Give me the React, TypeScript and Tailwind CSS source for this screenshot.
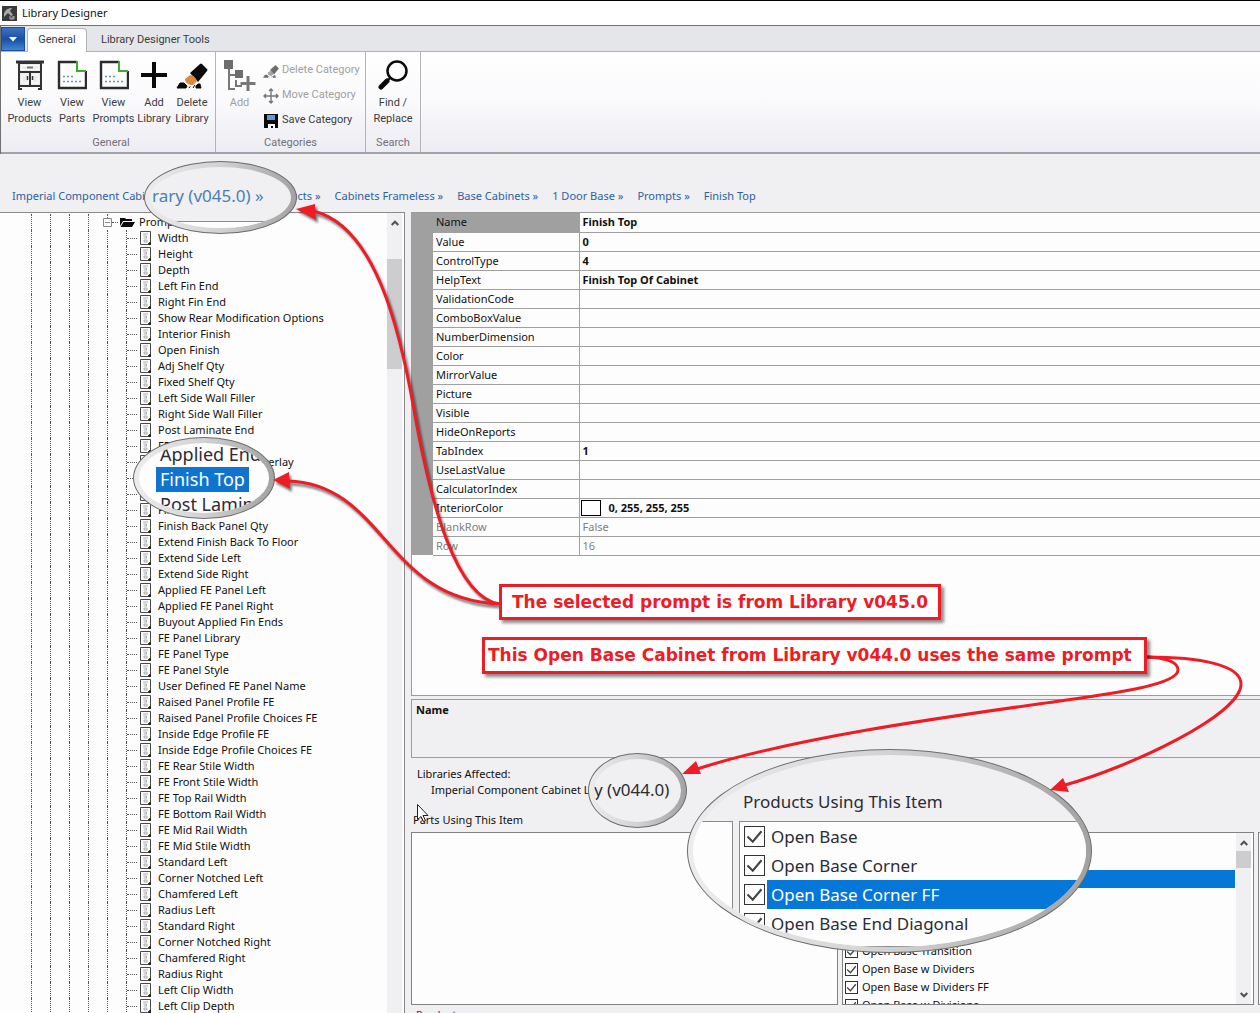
import type { ReactNode } from 'react';

interface Property {
  name: string;
  value?: string;
  swatch?: boolean;
  readOnly?: boolean;
}

const prompts = [
  'Width', 'Height', 'Depth', 'Left Fin End', 'Right Fin End', 'Show Rear Modification Options',
  'Interior Finish', 'Open Finish', 'Adj Shelf Qty', 'Fixed Shelf Qty', 'Left Side Wall Filler',
  'Right Side Wall Filler', 'Post Laminate End', 'FE Override', 'Applied End Panel Overlay',
  'Finish Top', 'Post Laminate Top', 'Finish Back', 'Finish Back Panel Qty',
  'Extend Finish Back To Floor', 'Extend Side Left', 'Extend Side Right', 'Applied FE Panel Left',
  'Applied FE Panel Right', 'Buyout Applied Fin Ends', 'FE Panel Library', 'FE Panel Type',
  'FE Panel Style', 'User Defined FE Panel Name', 'Raised Panel Profile FE',
  'Raised Panel Profile Choices FE', 'Inside Edge Profile FE', 'Inside Edge Profile Choices FE',
  'FE Rear Stile Width', 'FE Front Stile Width', 'FE Top Rail Width', 'FE Bottom Rail Width',
  'FE Mid Rail Width', 'FE Mid Stile Width', 'Standard Left', 'Corner Notched Left',
  'Chamfered Left', 'Radius Left', 'Standard Right', 'Corner Notched Right', 'Chamfered Right',
  'Radius Right', 'Left Clip Width', 'Left Clip Depth',
];

const properties: Property[] = [
  { name: 'Name', value: 'Finish Top' },
  { name: 'Value', value: '0' },
  { name: 'ControlType', value: '4' },
  { name: 'HelpText', value: 'Finish Top Of Cabinet' },
  { name: 'ValidationCode' },
  { name: 'ComboBoxValue' },
  { name: 'NumberDimension' },
  { name: 'Color' },
  { name: 'MirrorValue' },
  { name: 'Picture' },
  { name: 'Visible' },
  { name: 'HideOnReports' },
  { name: 'TabIndex', value: '1' },
  { name: 'UseLastValue' },
  { name: 'CalculatorIndex' },
  { name: 'InteriorColor', value: '0, 255, 255, 255', swatch: true },
  { name: 'BlankRow', value: 'False', readOnly: true },
  { name: 'Row', value: '16', readOnly: true },
];

const products = [
  'Open Base', 'Open Base Corner', 'Open Base Corner FF', 'Open Base End Diagonal',
  'Open Base End Diagonal FF', 'Open Base FF', 'Open Base Transition', 'Open Base w Dividers',
  'Open Base w Dividers FF', 'Open Base w Divisions',
];

const crumbs = [
  'Imperial Component Cabinet Library (v045.0) »', 'Products »', 'Cabinets Frameless »',
  'Base Cabinets »', '1 Door Base »', 'Prompts »', 'Finish Top',
];

function CabinetIcon() {
  return (
    <svg viewBox="0 0 30 30" className="size-[30px]" fill="none" stroke="#333" strokeWidth="2">
      <path d="M4 3h22v23H4z" fill="#ececec" />
      <path d="M1 2h28" strokeWidth="3" />
      <path d="M4 12h22M15 12v14M4 26v3M26 26v3" />
      <path d="M6.500 5.500h17v4h-17zM7 15h6v8H7zM17 15h6v8h-6z" stroke="#fff" strokeWidth="1" />
      <path d="M12 7.500h6" stroke="#777" />
      <path d="M12.500 16v4M17.500 16v4" strokeWidth="1.500" />
      <path d="M3 29h4M23 29h4" />
    </svg>
  );
}

function SheetIcon() {
  return (
    <svg viewBox="0 0 30 30" className="size-[30px]" fill="none">
      <path d="M20 2H2v26h27V11" stroke="#2b2b2b" strokeWidth="2.400" />
      <path d="M20 1v10h9" stroke="#3cae2c" strokeWidth="2" />
      <path d="M6 16.500h11M6 21.500h20" stroke="#6f8fb8" strokeWidth="1.600" strokeDasharray="2 2" />
    </svg>
  );
}

function EraserIcon({ className, muted }: { className: string; muted?: boolean }) {
  return (
    <svg viewBox="0 0 32 30" className={className}>
      <path d="M14 13 24 4q1-1 2 0l5 5q1 1 0 2l-9 11z" fill={muted ? '#6d6d6d' : '#0a0a0a'} />
      <path d="m9 19 5-4c3 0 6 3 7 6l-4 4c-4 0-8-2-8-6z" fill={muted ? '#a5a5a5' : '#dc8b3d'} />
      <path
        d="m1 28 3-5h4l3 3-1 2zM13 28l1-1.500M17 28l2-3M20 26l2-2h2l1 4h-5z"
        fill={muted ? '#6d6d6d' : '#0a0a0a'}
        stroke={muted ? '#6d6d6d' : '#0a0a0a'}
      />
    </svg>
  );
}

function TreeAddIcon() {
  return (
    <svg viewBox="0 0 32 34" className="h-[34px] w-8" fill="none" stroke="#777" strokeWidth="2">
      <path d="M5 9v20h6M5 15h6M12 20v6h6" />
      <path d="M0 0h9v9H0zM11 10h8v8h-8z" fill="#6d6d6d" stroke="none" />
      <path d="M24 16v15M16.500 23.500h15" strokeWidth="3" />
    </svg>
  );
}

function MoveIcon() {
  return (
    <svg viewBox="0 0 16 16" className="size-4" fill="none" stroke="#777" strokeWidth="1.400">
      <path d="M8 1v14M1 8h14M6 3l2-2 2 2M6 13l2 2 2-2M3 6 1 8l2 2M13 6l2 2-2 2" />
    </svg>
  );
}

function SaveIcon() {
  return (
    <svg viewBox="0 0 14 14" className="mx-px size-[14px]">
      <path d="M0 0h14v14H0z" fill="#0a0a0a" />
      <path d="M3 1h8v5H3z" fill="#5a9bd8" />
      <path d="M4 10h7v4H9v-2H7v2H4z" fill="#fff" />
    </svg>
  );
}

function PromptIcon() {
  return (
    <svg viewBox="0 0 12 16" className="h-4 w-3 shrink-0" fill="none" stroke="#4a4a4a">
      <path d="M.5 1.500h10v10l-3 3h-7z" />
      <path d="M3 4h5M3.500 6h3v2h-3M4 10h3v2H4z" stroke="#999" strokeWidth=".8" />
      <path d="M11 11v4H7.500z" fill="#222" stroke="none" />
    </svg>
  );
}

function Chevron({ down }: { down?: boolean }) {
  return (
    <svg viewBox="0 0 8 6" className="h-[6px] w-2" fill="none" stroke="#505050" strokeWidth="2">
      <path d={down ? 'M.7 1 4 4.300 7.300 1' : 'M.7 5 4 1.700 7.300 5'} />
    </svg>
  );
}

function RibbonButton({ className, icon, label }: { className: string; icon: ReactNode; label: string }) {
  return (
    <button className={`flex flex-col items-center pt-[2px] leading-4 ${className}`}>
      <span className="flex h-[35px] items-start">{icon}</span>
      <span className="whitespace-pre-line text-center">{label}</span>
    </button>
  );
}

function RibbonGroup({ className, title, children }: { className: string; title: string; children: ReactNode }) {
  return (
    <section className={`flex flex-col border-r border-[#b4b4b8] ${className}`}>
      <div className="flex flex-1 items-start pt-[6px]">{children}</div>
      <h2 className="pb-px text-center leading-4 text-[#707078]">{title}</h2>
    </section>
  );
}

function Ribbon() {
  return (
    <div className="shrink-0 border-l border-[#707070] font-['Roboto',sans-serif] text-[11px] text-[#3c3c3c]">
      <div className="flex h-[26px] items-end border-b border-[#b2b2b8] bg-[#e5e6ea]">
        <button
          aria-label="Application menu"
          className="flex h-6 w-6 items-center justify-center border border-[#1c4e9c] bg-linear-to-b from-[#3b74c4] via-[#1a4f9f] to-[#3f86d8]"
        >
          <svg viewBox="0 0 8 5" className="h-[5px] w-2">
            <path d="M0 0h8L4 4.500z" fill="#fff" />
          </svg>
        </button>
        <nav className="flex items-end">
          <button className="-mb-px ml-[2px] h-6 w-[60px] rounded-t-sm border border-b-0 border-[#b2b2b8] bg-white">
            General
          </button>
          <button className="h-[22px] px-[14px]">Library Designer Tools</button>
        </nav>
      </div>
      <div className="flex h-[102px] border-b-2 border-[#a2a2aa] bg-linear-to-b from-white via-[#fafafc] to-[#ececf2]">
        <RibbonGroup className="w-[215px] pl-[6px]" title="General">
          <RibbonButton className="w-[45px]" icon={<CabinetIcon />} label={'View\nProducts'} />
          <RibbonButton className="w-10" icon={<SheetIcon />} label={'View\nParts'} />
          <RibbonButton className="w-[43px]" icon={<SheetIcon />} label={'View\nPrompts'} />
          <RibbonButton
            className="w-[38px]"
            icon={
              <svg viewBox="0 0 28 30" className="h-[30px] w-7" stroke="#0a0a0a" strokeWidth="4">
                <path d="M14 2v26M1 15h26" />
              </svg>
            }
            label={'Add\nLibrary'}
          />
          <RibbonButton className="w-[38px]" icon={<EraserIcon className="h-[30px] w-8" />} label={'Delete\nLibrary'} />
        </RibbonGroup>
        <RibbonGroup className="w-[150px]" title="Categories">
          <RibbonButton className="w-[47px] text-[#a0a0a0]" icon={<TreeAddIcon />} label="Add" />
          <div className="flex flex-col">
            <button className="flex h-[25px] items-center gap-[3px] text-[#a0a0a0]">
              <EraserIcon className="size-4" muted /> Delete Category
            </button>
            <button className="flex h-[25px] items-center gap-[3px] text-[#a0a0a0]">
              <MoveIcon /> Move Category
            </button>
            <button className="flex h-[25px] items-center gap-[3px]">
              <SaveIcon /> Save Category
            </button>
          </div>
        </RibbonGroup>
        <RibbonGroup className="w-[55px]" title="Search">
          <RibbonButton
            className="w-full"
            icon={
              <svg viewBox="0 0 30 30" className="size-[30px]" fill="none" stroke="#0a0a0a">
                <circle cx="19" cy="11" r="9.500" strokeWidth="2.500" />
                <path d="m12 18-3 3" strokeWidth="2" />
                <path d="m9 21-6 6" strokeWidth="5" strokeLinecap="round" />
              </svg>
            }
            label={'Find /\nReplace'}
          />
        </RibbonGroup>
      </div>
    </div>
  );
}

function TreeGuides() {
  return (
    <>
      <span className="w-[19px] border-l border-dotted border-[#555]" />
      <span className="w-[19px] border-l border-dotted border-[#555]" />
      <span className="w-[19px] border-l border-dotted border-[#555]" />
      <span className="w-[19px] border-l border-dotted border-[#555]" />
    </>
  );
}

function PromptTree() {
  return (
    <div className="flex w-[405px] shrink-0 overflow-hidden border-t border-r border-[#8a8a8a] bg-[#fdfdfe]">
      <ul className="min-w-0 flex-1 pt-px pl-[31px]">
        <li className="flex h-4">
          <TreeGuides />
          <span className="-ml-1 flex w-[9px] flex-col items-center">
            <span className="h-1 border-l border-dotted border-[#555]" />
            <svg viewBox="0 0 9 9" className="size-[9px] shrink-0" fill="#fff" stroke="#888">
              <path d="M.5.5h8v8h-8zM2 4.500h5" />
            </svg>
          </span>
          <span className="mr-px flex w-[6px] items-center">
            <span className="w-full border-t border-dotted border-[#555]" />
          </span>
          <svg viewBox="0 0 16 16" className="size-4">
            <path d="M1 4h5l1 1h6v2H4l-3 5zM4.500 8H16l-3 5H1.500z" fill="#0a0a0a" />
          </svg>
          <span className="ml-1 leading-4">Prompts</span>
        </li>
        {prompts.map((prompt) => (
          <li key={prompt} className="flex h-4">
            <TreeGuides />
            <span className="w-[19px] border-l border-dotted border-[#555]" />
            <span className="flex w-[14px] items-center border-l border-dotted border-[#555]">
              <span className="w-[10px] border-t border-dotted border-[#555]" />
            </span>
            <PromptIcon />
            <span className="ml-[6px] whitespace-nowrap leading-4">{prompt}</span>
          </li>
        ))}
      </ul>
      <div className="mr-[2px] flex w-[15px] flex-col items-center bg-[#f0eff1] pt-[7px]">
        <Chevron />
        <span className="mt-[33px] h-[110px] w-full bg-[#cdcccf]" />
      </div>
    </div>
  );
}

function PropertyGrid() {
  return (
    <div className="h-[484px] shrink-0 border border-r-0 border-[#9c9c9c] bg-[#fdfdfe]">
      <table className="w-full table-fixed border-collapse">
        <colgroup>
          <col className="w-[21px]" />
          <col className="w-[146px]" />
          <col />
        </colgroup>
        <tbody>
          {properties.map((p, i) => (
            <tr key={p.name} className={`h-[19px] leading-[18px] ${p.readOnly ? 'text-[#808080]' : ''}`}>
              <td className="bg-[#a0a0a0] p-0" />
              <th
                scope="row"
                className={`border-r border-b border-[#a0a0a0] p-0 pl-[3px] text-left font-normal ${i === 0 ? 'bg-[#a0a0a0]' : ''}`}
              >
                {p.name}
              </th>
              <td className={`border-b border-[#a0a0a0] p-0 pl-[3px] ${p.readOnly ? '' : 'font-bold'}`}>
                <span className="flex items-center gap-2">
                  {p.swatch && <span className="-ml-[2px] h-4 w-5 border border-black bg-white" />}
                  {p.value}
                </span>
              </td>
            </tr>
          ))}
        </tbody>
      </table>
    </div>
  );
}

function Check({ id, className }: { id: string; className: string }) {
  return (
    <span className={`relative flex shrink-0 ${className}`}>
      <input
        id={id}
        type="checkbox"
        defaultChecked
        className="size-full appearance-none border border-[#333] bg-white"
      />
      <svg viewBox="0 0 12 12" className="pointer-events-none absolute inset-0 size-full" fill="none" stroke="#444">
        <path d="M2 6l3 3 5-6" strokeWidth="1.200" />
      </svg>
    </span>
  );
}

function AffectedLists() {
  return (
    <div className="flex h-[173px] shrink-0 gap-1">
      <div className="w-[427px] shrink-0 border border-[#828282] bg-[#fdfdfe]" />
      <div className="flex min-w-0 flex-1 border border-[#828282] bg-[#fdfdfe]">
        <ul className="min-w-0 flex-1 overflow-hidden pt-px pl-[2px]">
          {products.map((product, i) => (
            <li key={product} className="flex h-[18px] items-center gap-[2px]">
              <Check id={`product-${i}`} className="size-[13px]" />
              <label
                htmlFor={`product-${i}`}
                className={`h-[18px] flex-1 pl-[2px] leading-[18px] ${i === 2 ? 'bg-[#0477d9] text-white' : ''}`}
              >
                {product}
              </label>
            </li>
          ))}
        </ul>
        <div className="mr-[2px] ml-px flex w-[15px] flex-col items-center bg-[#f0eff1] pt-[7px] pb-[6px]">
          <Chevron />
          <span className="mt-[5px] h-[17px] w-full bg-[#cdcccf]" />
          <span className="mt-auto">
            <Chevron down />
          </span>
        </div>
      </div>
      <div className="w-[2px] border-y border-l border-[#828282] bg-[#fdfdfe]" />
    </div>
  );
}

function Lens({ className, children }: { className: string; children: ReactNode }) {
  return (
    <div
      className={`absolute rounded-[50%] border border-[#6c6c6c] bg-linear-to-r from-[#ededed] via-[#d2d2d2] to-[#a2a2a2] p-[5px] ${className}`}
    >
      <div className="flex size-full flex-col overflow-hidden rounded-[50%] bg-[#f0eff1] whitespace-nowrap text-[#2c2c34]">
        {children}
      </div>
    </div>
  );
}

function Lenses() {
  return (
    <>
      <Lens className="top-[161px] left-[144px] h-[73px] w-[153px]">
        <p className="h-[55px] border-b border-[#8a8a8a] pt-[17px] pl-[2px] text-[17px] leading-6 text-[#4a80b8]">
          rary (v045.0) »
        </p>
        <div className="flex-1 bg-[#fdfdfe]" />
      </Lens>
      <Lens className="top-[437px] left-[133px] h-[82px] w-[142px]">
        <div className="flex h-full flex-col bg-[#fdfdfe] pl-[17px] text-[18px] leading-[25px]">
          <p className="-mt-px px-1">Applied End</p>
          <p className="self-start bg-[#0f74cf] px-1 text-white">Finish Top</p>
          <p className="px-1">Post Laminate</p>
        </div>
      </Lens>
      <Lens className="top-[753px] left-[588px] h-[75px] w-[99px]">
        <p className="pt-[19px] text-[17px] leading-6">y (v044.0)</p>
      </Lens>
      <Lens className="top-[749px] left-[687px] h-[204px] w-[405px]">
        <h3 className="pt-[35px] pl-[50px] text-[17px] leading-6">Products Using This Item</h3>
        <div className="mt-[7px] flex flex-1 gap-[6px]">
          <div className="w-10 border border-l-0 border-[#8a8a8a] bg-[#fdfdfe]" />
          <ul className="flex-1 border border-r-0 border-[#8a8a8a] bg-[#fdfdfe] pl-1 text-[17px]">
            {products.slice(0, 4).map((product, i) => (
              <li key={product} className="flex items-center gap-[2px]">
                <Check id={`zoomed-${i}`} className="size-[21px]" />
                <label
                  htmlFor={`zoomed-${i}`}
                  className={`flex-1 pl-1 leading-[29px] ${i === 2 ? 'bg-[#0477d9] text-white' : ''}`}
                >
                  {product}
                </label>
              </li>
            ))}
          </ul>
        </div>
      </Lens>
    </>
  );
}

function Callouts() {
  return (
    <>
      <svg
        viewBox="0 0 1260 1013"
        className="pointer-events-none absolute top-0 left-0 h-[1013px] w-[1260px]"
        fill="none"
        stroke="#ee1c24"
        strokeWidth="3"
      >
        <g className="drop-shadow-[2px_3px_1px_rgba(0,0,0,0.5)]">
          <path d="M500 604C455 598 430 500 414 410C400 330 375 225 313 211" />
          <path d="M500 604C385 600 385 484 288 481" />
          <path d="m296 209 19-5 1 16zM273 480l16-8 1 17z" fill="#ee1c24" stroke="none" />
        </g>
        <path d="M1147 657C1165 658 1178 662 1178 670C1178 685 1110 694 1060 701C960 715 800 736 697 769" />
        <path d="M1147 657C1200 657 1241 665 1241 684C1241 715 1130 767 1065 785" />
        <path d="m682 774 14-13 5 13zM1050 790l13-12 6 14z" fill="#ee1c24" stroke="none" />
      </svg>
      <p className="absolute top-[584px] left-[499px] border-[3px] border-[#ee1c24] bg-white px-[10px] font-['DejaVu_Sans',sans-serif] text-[17px] leading-[30px] font-bold whitespace-nowrap text-[#ee1c24] shadow-[3px_3px_3px_rgba(0,0,0,0.45)]">
        The selected prompt is from Library v045.0
      </p>
      <p className="absolute top-[637px] left-[482px] border-[3px] border-[#ee1c24] bg-white pr-3 pl-[3px] font-['DejaVu_Sans',sans-serif] text-[17px] leading-[31px] font-bold whitespace-nowrap text-[#ee1c24] shadow-[3px_3px_3px_rgba(0,0,0,0.45)]">
        This Open Base Cabinet from Library v044.0 uses the same prompt
      </p>
    </>
  );
}

export default function App() {
  return (
    <div className="relative flex h-screen flex-col overflow-hidden bg-[#f0eff1] font-['Noto_Sans',sans-serif] text-[11px] text-[#111]">
      <header className="flex h-[26px] shrink-0 items-center gap-[5px] border-t border-b border-t-black border-b-[#707070] bg-white pl-[2px]">
        <svg viewBox="0 0 15 15" className="size-[15px]">
          <path d="M0 0h15v15H0z" fill="#3a3a3a" />
          <path d="M2 8c1-4 4-6 8-6l-2 3 3 4-2 1-3-3-4 4z" fill="#aaa" />
          <path d="M8 10v3h2M12 10v3h-2v-2h2" fill="none" stroke="#ccc" strokeWidth=".8" />
        </svg>
        <h1>Library Designer</h1>
      </header>
      <Ribbon />
      <nav className="flex h-[58px] shrink-0 items-center gap-[14px] pt-[26px] pl-3 whitespace-nowrap text-[#2c62a4]">
        {crumbs.map((crumb) => (
          <a key={crumb} href="#level">{crumb}</a>
        ))}
      </nav>
      <div className="flex min-h-0 flex-1">
        <PromptTree />
        <main className="flex min-w-0 flex-1 flex-col pl-[6px]">
          <PropertyGrid />
          <div className="mt-[3px] h-[59px] shrink-0 border border-r-0 border-[#9c9c9c] px-1 py-[2px] leading-4 font-bold">
            Name
          </div>
          <div className="px-[6px] pt-2 leading-4">
            <p>Libraries Affected:</p>
            <p className="pl-[14px]">Imperial Component Cabinet Library (v044.0)</p>
          </div>
          <p className="mt-[14px] mb-1 pl-[2px] leading-4">Parts Using This Item</p>
          <AffectedLists />
          <p className="mt-[2px] pl-[5px] leading-4 text-[#8c1020]">Products</p>
        </main>
      </div>
      <Lenses />
      <Callouts />
      <svg viewBox="0 0 12 18" className="absolute top-[804px] left-[417px] h-[18px] w-3">
        <path d="M.5.5v15l3.500-3 2.500 5 2-1-2.500-5h5z" fill="#fff" stroke="#222" />
      </svg>
    </div>
  );
}
